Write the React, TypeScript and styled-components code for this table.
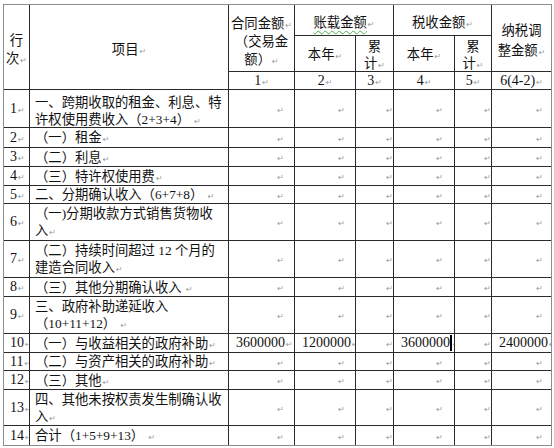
import React from "react";
import styled, { createGlobalStyle } from "styled-components";

const Global = createGlobalStyle`
  html, body { margin: 0; padding: 0; background: #fff; }
  body {
    font-family: "Liberation Serif", "Noto Sans CJK SC", serif;
    color: #111;
  }
`;

const Page = styled.div`
  width: 554px;
  height: 448px;
  padding: 4px 0 0 3px;
  box-sizing: border-box;
  background: #fff;
  overflow: hidden;
`;

const Grid = styled.div`
  display: grid;
  width: 549px;
  box-sizing: border-box;
  grid-template-columns: 25px 198px 65px 60px 37px 60px 36px 59px;
  grid-template-rows: 30px 35px 17px 37px 19px 18px 18px 17px 36px 36px 18px 36px 18px 17px 18px 35px 19px;
  gap: 1px;
  background: #2a2a2a;
  border: 1px solid #8c8c8c;
  font-size: 13.33px;
`;

const HeaderCell = styled.div<{ $col: string; $row: string; $lh?: number; $pt?: number }>`
  grid-column: ${(p) => p.$col};
  grid-row: ${(p) => p.$row};
  background: #fff;
  display: flex;
  align-items: center;
  justify-content: center;
  text-align: center;
  font-family: "Noto Sans CJK SC", sans-serif;
  line-height: ${(p) => p.$lh ?? 18}px;
  padding-top: ${(p) => p.$pt ?? 4}px;
  box-sizing: border-box;
  white-space: nowrap;
  overflow: hidden;
`;

const NumberCell = styled.div<{ $col: string }>`
  grid-column: ${(p) => p.$col};
  grid-row: 3;
  background: #fff;
  display: flex;
  align-items: center;
  justify-content: center;
  line-height: 17px;
  font-size: 14px;
  white-space: nowrap;
  overflow: hidden;
`;

const IndexCell = styled.div`
  background: #fff;
  display: flex;
  align-items: center;
  padding-left: 6px;
  font-size: 14px;
  white-space: nowrap;
  overflow: hidden;
`;

const ItemCell = styled.div<{ $shift?: number }>`
  background: #fff;
  display: flex;
  align-items: center;
  padding-left: 5px;
  padding-top: ${(p) => p.$shift ?? 0}px;
  box-sizing: border-box;
  line-height: 17px;
  white-space: nowrap;
  overflow: hidden;
`;

const AmountCell = styled.div<{ $padR: number; $filled?: boolean }>`
  background: #fff;
  display: flex;
  align-items: center;
  justify-content: ${(p) => (p.$filled ? "flex-start" : "flex-end")};
  padding: 0 ${(p) => (p.$filled ? 0 : p.$padR)}px 0 ${(p) => (p.$filled ? 7 : 0)}px;
  font-size: 14px;
  white-space: nowrap;
  overflow: hidden;
`;

const Mark = styled.span`
  font-family: "DejaVu Sans", sans-serif;
  font-size: 8px;
  line-height: 0;
  color: #9a9a9a;
  margin-left: 1px;
`;

const Squiggle = styled.span`
  text-decoration: underline wavy #4caf50;
  text-decoration-thickness: 1px;
  text-underline-offset: 3px;
`;

const Caret = styled.span`
  display: inline-block;
  width: 2px;
  height: 16px;
  background: #000;
  vertical-align: middle;
`;

const Lines = styled.div`
  display: block;
`;

const M = () => <Mark>↵</Mark>;

type Row = {
  n: string;
  lines: string[];
  vals?: string[];
};

const rows: Row[] = [
  { n: "1", lines: ["一、跨期收取的租金、利息、特", "许权使用费收入（2+3+4） "] },
  { n: "2", lines: ["（一）租金"] },
  { n: "3", lines: ["（二）利息"] },
  { n: "4", lines: ["（三）特许权使用费"] },
  { n: "5", lines: ["二、分期确认收入（6+7+8） "] },
  { n: "6", lines: ["（一)分期收款方式销售货物收", "入"] },
  { n: "7", lines: ["（二）持续时间超过 12 个月的", "建造合同收入"] },
  { n: "8", lines: ["（三）其他分期确认收入 "] },
  { n: "9", lines: ["三、政府补助递延收入", "（10+11+12） "] },
  {
    n: "10",
    lines: ["（一）与收益相关的政府补助"],
    vals: ["3600000", "1200000", "", "3600000", "", "2400000"],
  },
  { n: "11", lines: ["（二）与资产相关的政府补助"] },
  { n: "12", lines: ["（三）其他"] },
  { n: "13", lines: ["四、其他未按权责发生制确认收", "入"] },
  { n: "14", lines: ["合计（1+5+9+13） "] },
];

const padRight = [10, 10, 0, 11, 0, 8];

export default function App() {
  return (
    <>
      <Global />
      <Page>
        <Grid>
          <HeaderCell $col="1" $row="1 / 4">
            <Lines>
              行<br />次<M />
            </Lines>
          </HeaderCell>
          <HeaderCell $col="2" $row="1 / 4">
            <span>
              项目<M />
            </span>
          </HeaderCell>
          <HeaderCell $col="3" $row="1 / 3" $pt={6}>
            <Lines>
              合同金额<M />
              <br />
              （交易金
              <br />
              额）<M />
            </Lines>
          </HeaderCell>
          <HeaderCell $col="4 / 6" $row="1">
            <span>
              <Squiggle>账载金额</Squiggle>
              <M />
            </span>
          </HeaderCell>
          <HeaderCell $col="6 / 8" $row="1">
            <span>
              税收金额<M />
            </span>
          </HeaderCell>
          <HeaderCell $col="8" $row="1 / 3" $lh={20}>
            <Lines>
              纳税调
              <br />
              整金额<M />
            </Lines>
          </HeaderCell>
          <HeaderCell $col="4" $row="2" $pt={0}>
            <span>
              本年<M />
            </span>
          </HeaderCell>
          <HeaderCell $col="5" $row="2" $lh={17} $pt={0}>
            <Lines>
              累<br />计<M />
            </Lines>
          </HeaderCell>
          <HeaderCell $col="6" $row="2" $pt={0}>
            <span>
              本年<M />
            </span>
          </HeaderCell>
          <HeaderCell $col="7" $row="2" $lh={17} $pt={0}>
            <Lines>
              累<br />计<M />
            </Lines>
          </HeaderCell>
          {["1", "2", "3", "4", "5", "6(4-2)"].map((t, i) => (
            <NumberCell key={t} $col={String(i + 3)}>
              <span>
                {t}
                <M />
              </span>
            </NumberCell>
          ))}

          {rows.map((r) => (
            <React.Fragment key={r.n}>
              <IndexCell>
                <span>
                  {r.n}
                  <M />
                </span>
              </IndexCell>
              <ItemCell $shift={r.n === "1" ? 4 : 0}>
                <Lines>
                  {r.lines.map((l, i) => (
                    <React.Fragment key={i}>
                      {i > 0 && <br />}
                      {l}
                      {i === r.lines.length - 1 && <M />}
                    </React.Fragment>
                  ))}
                </Lines>
              </ItemCell>
              {padRight.map((p, ci) => {
                const v = r.vals ? r.vals[ci] : "";
                return (
                  <AmountCell key={ci} $padR={p} $filled={!!v}>
                    <span>
                      {v}
                      {r.n === "10" && ci === 3 && <Caret />}
                      <M />
                    </span>
                  </AmountCell>
                );
              })}
            </React.Fragment>
          ))}
        </Grid>
      </Page>
    </>
  );
}
